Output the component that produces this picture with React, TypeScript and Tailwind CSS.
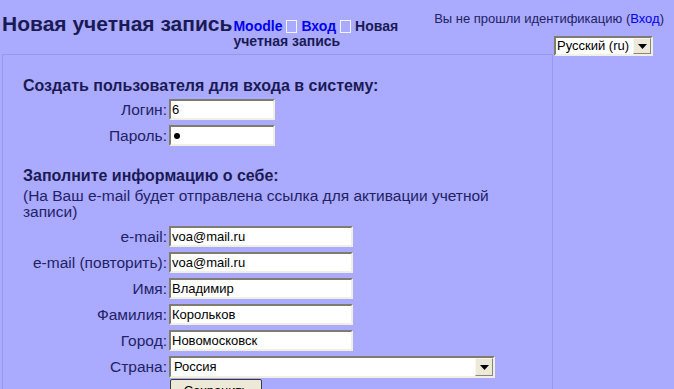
import React from "react";

function Field({ label, value, w }: { label: string; value: string; w: string }) {
  return (
    <>
      <div className="text-right text-[15.5px] leading-[21px] text-[#222266] pr-[2px]">{label}</div>
      <div className={`h-[21px] ${w} bg-white border-2 border-t-[#7f7c6e] border-l-[#7f7c6e] border-b-[#f1efe2] border-r-[#f1efe2] text-[13px] leading-[17px] text-black pl-[1px]`}>
        {value}
      </div>
    </>
  );
}

function Arrow() {
  return (
    <div className="h-full w-[18px] bg-[#ece9d8] border border-t-[#f8f7f2] border-l-[#f8f7f2] border-b-[#8a877a] border-r-[#8a877a] flex items-center justify-center">
      <svg width="9" height="5" viewBox="0 0 9 5">
        <polygon points="0,0 9,0 4.5,5" fill="#000" />
      </svg>
    </div>
  );
}

function Crumb() {
  return <span className="inline-block w-[11px] h-[13px] border border-[#f4f4ff] align-[-2px] mx-[4px]" />;
}

export default function App() {
  return (
    <div className="h-[389px] flex flex-col bg-[#aaaaff] font-['Liberation_Sans',Arial,sans-serif] text-[#222266] overflow-hidden">
      {/* header */}
      <div className="flex h-[54px] shrink-0">
        <div className="flex items-baseline pt-[12px]">
          <h1 className="pl-[2px] text-[21px] font-bold leading-[24px] text-[#1a1a55] whitespace-nowrap">
            Новая учетная запись
          </h1>
          <div className="w-[200px] text-[14px] font-bold leading-[15px] text-[#1a1a55] pl-[1px]">
            <span className="text-[#0000ee]">Moodle</span>
            <Crumb />
            <span className="text-[#0000ee]">Вход</span>
            <Crumb />
            Новая учетная запись
          </div>
        </div>
        <div className="ml-auto flex flex-col items-end pt-[11px]">
          <div className="text-[13px] leading-[16px] pr-[10px] whitespace-nowrap text-[#222266]">
            Вы не прошли идентификацию (<span className="text-[#0000ee]">Вход</span>)
          </div>
          <div className="mt-[9px] mr-[21px] w-[99px] h-[21px] bg-white border-2 border-t-[#7f7c6e] border-l-[#7f7c6e] border-b-[#f1efe2] border-r-[#f1efe2] flex items-center">
            <span className="flex-1 text-[13px] leading-[16px] text-black pl-[1px] whitespace-nowrap">Русский (ru)</span>
            <Arrow />
          </div>
        </div>
      </div>

      {/* body */}
      <div className="flex flex-1">
        <div className="ml-[2px] w-[551px] border-l border-t border-r border-[#9797f5] pt-[22px]">
          <h2 className="pl-[20px] text-[16px] font-bold leading-[18px] text-[#1a1a55]">
            Создать пользователя для входа в систему:
          </h2>
          <div className="grid grid-cols-[166px_auto] gap-y-[5px] mt-[4px]">
            <Field label="Логин:" value="6" w="w-[106px]" />
            <div className="text-right text-[15.5px] leading-[21px] pr-[2px]">Пароль:</div>
            <div className="h-[21px] w-[106px] bg-white border-2 border-t-[#7f7c6e] border-l-[#7f7c6e] border-b-[#f1efe2] border-r-[#f1efe2] flex items-center pl-[3px]">
              <span className="block w-[6px] h-[6px] rounded-full bg-black" />
            </div>
          </div>

          <h2 className="mt-[21px] pl-[20px] text-[16px] font-bold leading-[18px] text-[#1a1a55]">
            Заполните информацию о себе:
          </h2>
          <div className="mt-[3px] pl-[20px] text-[15.5px] leading-[16px] text-[#222266] w-[500px]">
            (На Ваш e-mail будет отправлена ссылка для активации учетной записи)
          </div>
          <div className="grid grid-cols-[166px_auto] gap-y-[5px] mt-[6px]">
            <Field label="e-mail:" value="voa@mail.ru" w="w-[184px]" />
            <Field label="e-mail (повторить):" value="voa@mail.ru" w="w-[184px]" />
            <Field label="Имя:" value="Владимир" w="w-[184px]" />
            <Field label="Фамилия:" value="Корольков" w="w-[184px]" />
            <Field label="Город:" value="Новомосковск" w="w-[184px]" />
            <div className="text-right text-[15.5px] leading-[22px] pr-[2px]">Страна:</div>
            <div className="h-[22px] w-[326px] bg-white border-2 border-t-[#7f7c6e] border-l-[#7f7c6e] border-b-[#f1efe2] border-r-[#f1efe2] flex items-center">
              <span className="flex-1 text-[13px] leading-[16px] text-black pl-[3px]">Россия</span>
              <Arrow />
            </div>
            <div />
            <div>
              <div className="ml-[1px] -mt-[4px] w-[92px] h-[24px] bg-[#ece9d8] border border-[#3a3a3a] rounded-[2px] text-[13px] leading-[22px] text-black text-center">
                Сохранить
              </div>
            </div>
          </div>
        </div>
        <div className="flex-1" />
      </div>
    </div>
  );
}
